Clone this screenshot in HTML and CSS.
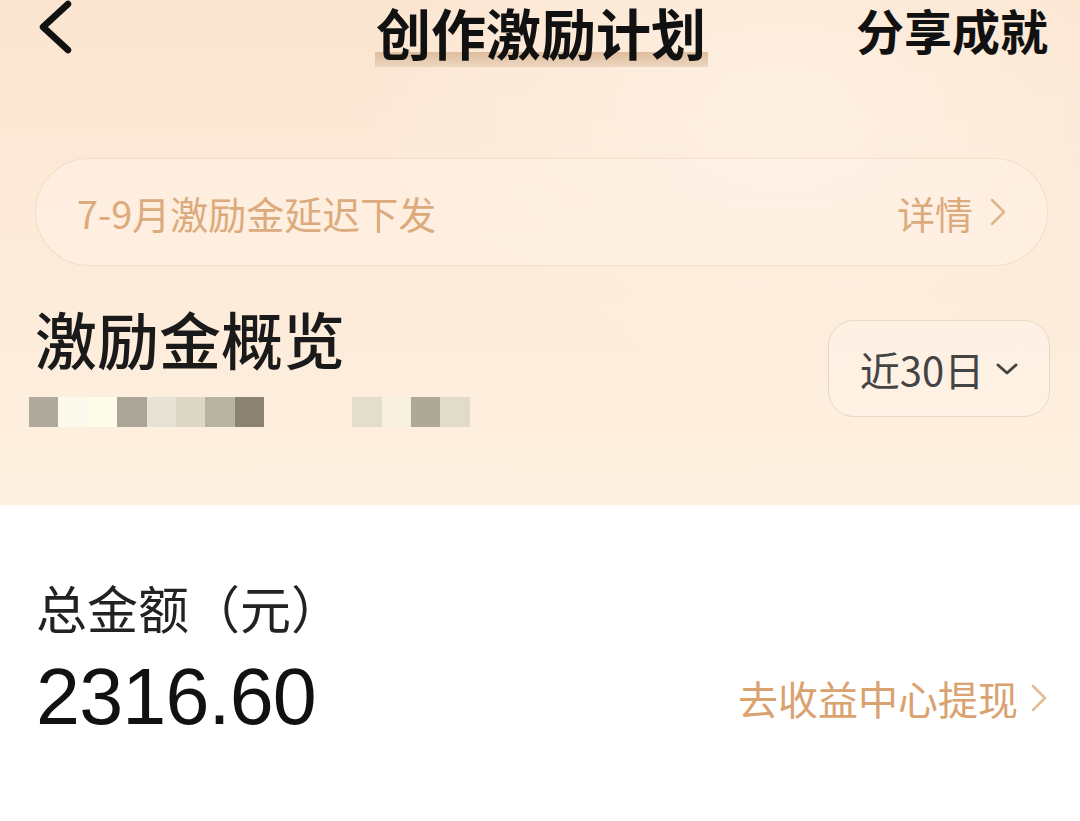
FILE: index.html
```html
<!DOCTYPE html>
<html lang="zh-CN">
	<head>
		<meta charset="utf-8" />
		<title>创作激励计划</title>
		<meta name="viewport" content="width=device-width, initial-scale=1.0" />
		<link rel="stylesheet" href="styles.css">
	</head>

	<body>
		<div class="page">
			<div class="top">
				<header class="nav">
					<a class="back" href="#">
						<svg width="40" height="56" viewBox="0 0 40 56">
							<polyline points="31,4 6,27 31,50" fill="none" stroke="#111" stroke-width="6.5" stroke-linecap="round" stroke-linejoin="round" />
						</svg>
					</a>
					<h1 class="title"><span>创作激励计划</span></h1>
					<a class="share" href="#">分享成就</a>
				</header>

				<div class="notice">
					<span class="notice-text">7-9月激励金延迟下发</span>
					<span class="notice-more">详情
						<svg width="18" height="30" viewBox="0 0 18 30">
							<polyline points="3,3 15,15 3,27" fill="none" stroke="#e0b58c" stroke-width="2.5" stroke-linecap="round" stroke-linejoin="round" />
						</svg>
					</span>
				</div>

				<div class="overview">
					<div>
						<h2 class="overview-title">激励金概览</h2>
						<div class="mosaic">
							<i style="background:#b0aa9c"></i>
							<i style="background:#fbf8ec"></i>
							<i style="background:#fdfce8"></i>
							<i style="background:#aca698"></i>
							<i style="background:#e6e3d5"></i>
							<i style="background:#dcd7c7"></i>
							<i style="background:#b8b4a4"></i>
							<i style="background:#8a8373"></i>
							<i></i>
							<i></i>
							<i></i>
							<i style="background:#e3ddcd"></i>
							<i style="background:#f8f1e2"></i>
							<i style="background:#aea896"></i>
							<i style="background:#e1dbcb"></i>
						</div>
					</div>
					<button class="range">近30日
						<svg width="26" height="16" viewBox="0 0 26 16">
							<polyline points="4,4 13,12 22,4" fill="none" stroke="#444" stroke-width="3" stroke-linecap="round" stroke-linejoin="round" />
						</svg>
					</button>
				</div>
			</div>

			<div class="total">
				<div class="total-label">总金额（元）</div>
				<div class="total-row">
					<span class="total-value">2316.60</span>
					<a class="withdraw" href="#">去收益中心提现
						<svg width="18" height="30" viewBox="0 0 18 30">
							<polyline points="3,3 15,15 3,27" fill="none" stroke="#e3bb94" stroke-width="2.5" stroke-linecap="round" stroke-linejoin="round" />
						</svg>
					</a>
				</div>
			</div>
		</div>
	</body>
</html>
```

FILE: styles.css
```css
body {
  margin: 0;
  background: #fff;
  font-family: "Noto Sans CJK SC", "Noto Sans", sans-serif;
  color: #1a1a1a;
}
a {
  text-decoration: none;
  color: inherit;
}
.page {
  width: 1080px;
  height: 821px;
  overflow: hidden;
}
.top {
  height: 505px;
  box-sizing: border-box;
  padding: 0 32px 0 35px;
  background:
    radial-gradient(ellipse 420px 260px at 780px 110px, rgba(255, 244, 232, 0.7), rgba(255, 244, 232, 0)),
    linear-gradient(to bottom, #fbe5d1 0%, #fdebd9 55%, #fef0e0 100%);
}
.nav {
  height: 70px;
  display: grid;
  grid-template-columns: 1fr auto 1fr;
  align-items: start;
}
.back {
  display: flex;
  margin-left: 2px;
}
/* latin font first keeps the line box tight round the CJK glyphs */
.title {
  margin: 9px 0 0;
  font-family: "Liberation Sans", "Noto Sans CJK SC", sans-serif;
  font-size: 55px;
  font-weight: 700;
  line-height: 1;
  color: #111;
}
.title span {
  display: inline-block;
  padding: 0 2px 3px 1px;
  background: linear-gradient(to bottom, transparent 0, transparent 74%, #dfbd9c 74%, #ecd6c1 100%);
}
.share {
  justify-self: end;
  margin-top: 10px;
  font-family: "Liberation Sans", "Noto Sans CJK SC", sans-serif;
  font-size: 48px;
  line-height: 1;
  font-weight: 700;
  color: #111;
}
.notice {
  margin-top: 88px;
  height: 108px;
  box-sizing: border-box;
  border-radius: 54px;
  border: 1.5px solid rgba(240, 214, 190, 0.7);
  background: rgba(255, 243, 231, 0.55);
  padding: 0 40px 0 41px;
  display: flex;
  align-items: center;
  justify-content: space-between;
  font-size: 38px;
  color: #dcab7d;
}
.notice-more {
  display: flex;
  align-items: center;
  gap: 16px;
}
.overview {
  margin-top: 36px;
  display: flex;
  justify-content: space-between;
  align-items: flex-start;
}
.overview-title {
  margin: 0;
  font-size: 62px;
  font-weight: 500;
  line-height: 72px;
  color: #1a1a1a;
}
.mosaic {
  display: flex;
  margin: 23px 0 0 -6px;
}
.mosaic i {
  display: block;
  width: 29.4px;
  height: 30px;
}
.range {
  margin: 18px -2px 0 0;
  width: 222px;
  height: 97px;
  box-sizing: border-box;
  border: 1.5px solid #ead8c6;
  border-radius: 26px;
  background: rgba(255, 244, 233, 0.6);
  font-family: inherit;
  font-size: 40px;
  color: #444;
  display: flex;
  align-items: center;
  justify-content: center;
  gap: 10px;
  padding: 0 0 0 2px;
}
.total {
  padding: 69px 32px 0 36px;
}
.total-label {
  font-size: 51px;
  line-height: 66px;
  color: #222;
}
.total-row {
  display: flex;
  justify-content: space-between;
  align-items: center;
  margin-top: 12px;
}
.total-value {
  font-family: "Liberation Sans", Arial, sans-serif;
  font-size: 79px;
  letter-spacing: -0.8px;
  line-height: 90px;
  color: #111;
}
.withdraw {
  display: flex;
  align-items: center;
  gap: 12px;
  font-size: 40px;
  color: #d9a26f;
  margin-top: 2px;
}
```
